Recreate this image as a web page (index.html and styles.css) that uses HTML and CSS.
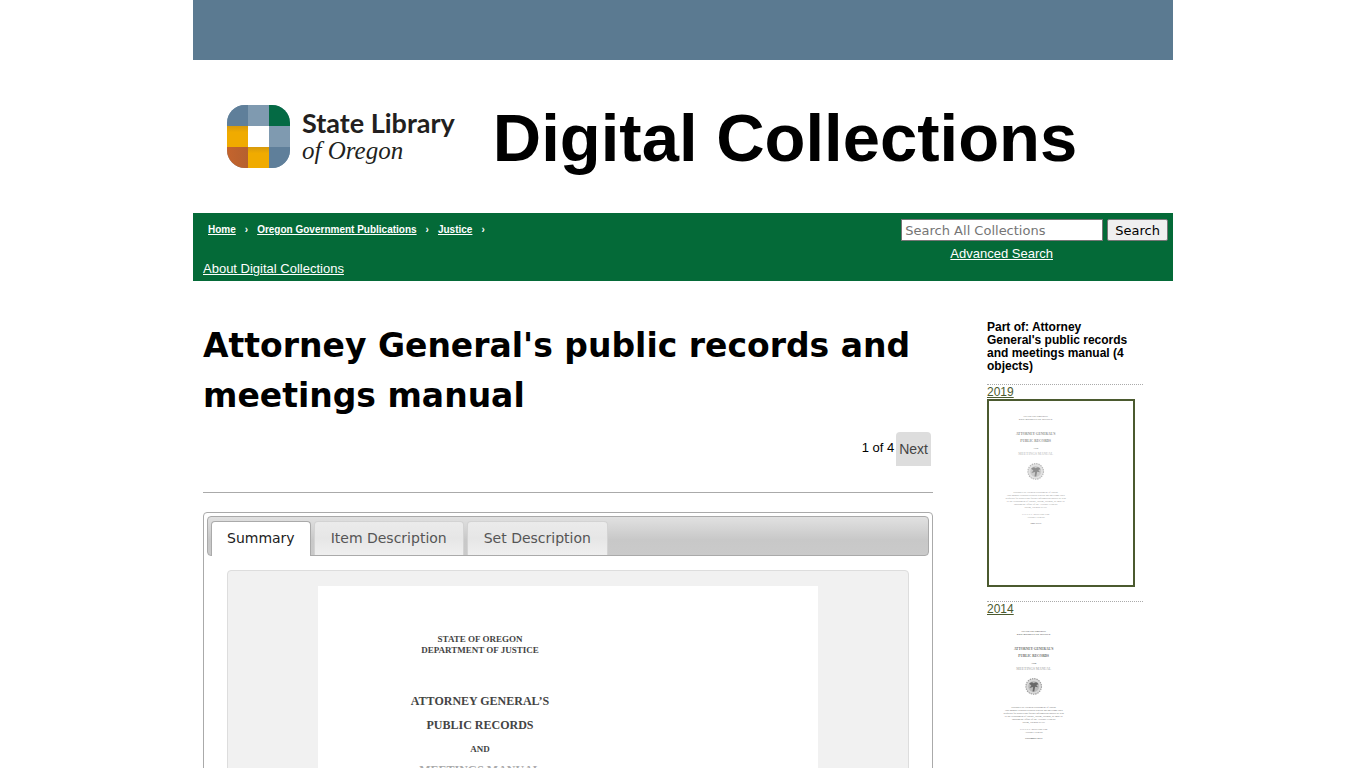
FILE: index.html
```html
<!DOCTYPE html>
<html lang="en">
<head>
<meta charset="utf-8">
<title>Attorney General's public records and meetings manual</title>
<meta name="viewport" content="width=device-width, initial-scale=1">
<link rel="stylesheet" href="styles.css">
</head>
<body>
<svg class="defs" aria-hidden="true">
  <defs>
    <clipPath id="logo-clip"><rect width="63" height="63" rx="18"/></clipPath>
    <linearGradient id="gold" x1="0" y1="0" x2="0" y2="1"><stop offset="0" stop-color="#d79a0c"/><stop offset=".3" stop-color="#f0ab00"/></linearGradient>
    <linearGradient id="rust" x1="0" y1="0" x2="1" y2="0"><stop offset="0" stop-color="#c4642d"/><stop offset="1" stop-color="#b5602f"/></linearGradient>
    <symbol id="cover" viewBox="0 0 500 640">
      <g class="cover-text">
        <g class="cover-small">
          <text x="162" y="56">STATE OF OREGON</text>
          <text x="162" y="67">DEPARTMENT OF JUSTICE</text>
        </g>
        <g class="cover-title">
          <text x="162" y="119">ATTORNEY GENERAL’S</text>
          <text x="162" y="143">PUBLIC RECORDS</text>
        </g>
        <text class="cover-small" x="162" y="166">AND</text>
        <text class="cover-title cover-faint" x="162" y="188">MEETINGS MANUAL</text>
        <circle cx="162" cy="245" r="27" fill="#d0d0d0" stroke="#888" stroke-width="4" stroke-dasharray="5 3"/>
        <circle cx="162" cy="245" r="19" fill="#aaa"/>
        <path d="M146 236q8-10 16-2q10-9 17 3l-8 3 6 8-10-2-3 17h-6l2-16-13 3 7-8z" fill="#444"/>
        <g class="cover-body">
          <text x="162" y="321">Published by Oregon Department of Justice</text>
          <text x="162" y="331">This manual describes public records and meetings laws</text>
          <text x="162" y="341">Requests for copies and further information should be sent</text>
          <text x="162" y="351">to the Department of Justice, Salem, Oregon, by mail or</text>
          <text x="162" y="361">through the office of the Attorney General</text>
          <text x="162" y="371">Salem, Oregon 97301</text>
          <text x="162" y="397">ELLEN F. ROSENBLUM</text>
          <text x="162" y="407">Attorney General</text>
        </g>
      </g>
    </symbol>
  </defs>
</svg>
<div class="page">
  <div class="topband"></div>
  <header class="masthead">
    <a class="logo" href="#">
      <svg class="logo-mark" viewBox="0 0 63 63" aria-hidden="true">
        <g clip-path="url(#logo-clip)">
          <rect width="63" height="63" fill="#7f9ab0"/>
          <rect width="21" height="21" fill="#5f7f9a"/>
          <rect x="42" width="21" height="21" fill="#046a44"/>
          <rect y="21" width="21" height="21" fill="url(#gold)"/>
          <rect x="21" y="21" width="21" height="21" fill="#fff"/>
          <rect y="42" width="21" height="21" fill="url(#rust)"/>
          <rect x="21" y="42" width="21" height="21" fill="url(#gold)"/>
          <rect x="42" y="42" width="21" height="21" fill="#5f7f9a"/>
        </g>
      </svg>
      <span class="logo-words"><span class="logo-name">State Library</span><span class="logo-place">of Oregon</span></span>
    </a>
    <div class="site-title">Digital Collections</div>
  </header>
  <div class="navbar">
    <div class="nav-left">
      <nav class="crumbs"><a href="#">Home</a><span>›</span><a href="#">Oregon Government Publications</a><span>›</span><a href="#">Justice</a><span>›</span></nav>
      <a class="about" href="#">About Digital Collections</a>
    </div>
    <form class="search">
      <div class="search-row">
        <input type="text" placeholder="Search All Collections" aria-label="Search All Collections">
        <button type="button">Search</button>
      </div>
      <a class="advanced" href="#">Advanced Search</a>
    </form>
  </div>
  <div class="content">
    <main class="main">
      <h1>Attorney General's public records and meetings manual</h1>
      <div class="pager"><span>1 of 4</span><button type="button">Next</button></div>
      <section class="tabs">
        <div class="tablist" role="tablist">
          <button type="button" class="tab active" role="tab" aria-selected="true">Summary</button>
          <button type="button" class="tab" role="tab" aria-selected="false">Item Description</button>
          <button type="button" class="tab" role="tab" aria-selected="false">Set Description</button>
        </div>
        <div class="panel">
          <svg class="cover-large" viewBox="0 0 500 640" role="img" aria-label="Manual cover"><use href="#cover" width="500" height="640"/></svg>
        </div>
      </section>
    </main>
    <aside class="sidebar">
      <h2>Part of: Attorney General's public records and meetings manual (4 objects)</h2>
      <div class="item">
        <a href="#">2019</a>
        <svg class="thumb current" viewBox="0 0 500 640" role="img" aria-label="2019 cover"><g class="faded"><use href="#cover" width="500" height="640"/><text class="cover-date" x="162" y="427">June 2019</text></g></svg>
      </div>
      <div class="item">
        <a href="#">2014</a>
        <svg class="thumb" viewBox="0 0 500 640" role="img" aria-label="2014 cover"><g class="soft"><use href="#cover" width="500" height="640"/><text class="cover-date" x="162" y="427">November 2014</text></g></svg>
      </div>
    </aside>
  </div>
</div>
</body>
</html>
```

FILE: styles.css
```css
* { box-sizing: border-box; }
body {
  margin: 0;
  background: #fff;
  color: #000;
  font-family: "Liberation Sans", Arial, sans-serif;
  font-size: 13px;
}
.defs { display: block; width: 0; height: 0; }
.page { max-width: 980px; margin: 0 auto; }
.topband { height: 60px; background: #5b7a91; }

.masthead {
  display: flex;
  align-items: center;
  gap: 38px;
  height: 153px;
  padding: 0 34px;
}
.logo { display: flex; align-items: center; gap: 12px; color: #231f20; text-decoration: none; }
.logo-mark { width: 63px; height: 63px; }
.logo-words { display: flex; flex-direction: column; }
.logo-name { font: bold 27px/28px Lato, sans-serif; }
.logo-place { font: italic 25px/28px "Liberation Serif", serif; }
.site-title { padding-top: 2px; font-size: 67px; font-weight: bold; line-height: 76px; white-space: nowrap; }

.navbar {
  display: flex;
  justify-content: space-between;
  padding: 6px 5px 4px 10px;
  background: #046a38;
  color: #fff;
}
.navbar a { color: #fff; }
.nav-left { display: flex; flex-direction: column; justify-content: space-between; align-items: flex-start; }
.crumbs { display: flex; gap: 9px; padding: 4px 5px; font-size: 10px; font-weight: bold; line-height: 13px; }
.about { line-height: 16px; }
.search { display: flex; flex-direction: column; align-items: center; gap: 4px; padding-bottom: 15px; }
.search-row { display: flex; gap: 4px; }
.search input, .search button {
  height: 22px;
  border: 1px solid #767676;
  font: 13px "DejaVu Sans", sans-serif;
}
.search input { width: 202px; padding: 1px 3px; border-radius: 0; }
.search input::placeholder { color: #757575; }
.search button { padding: 0 7px; border-radius: 2px; background: #efefef; color: #000; }
.advanced { padding-right: 66px; line-height: 17px; }

.content { display: flex; justify-content: space-between; padding: 39px 30px 30px 10px; }
.main { width: 730px; }
h1 { margin: 0; padding-top: 1px; font: bold 33px/50px "DejaVu Sans", sans-serif; }
.pager {
  display: flex;
  justify-content: flex-end;
  align-items: flex-start;
  gap: 2px;
  margin-bottom: 19px;
  padding: 11px 2px 26px;
  border-bottom: 1px solid #aaa;
  line-height: 32px;
}
.pager button {
  height: 34px;
  padding: 0 3px;
  border: 0;
  border-radius: 4px 4px 0 0;
  background: #ddd;
  color: #444;
  font: 14px "Liberation Sans", sans-serif;
}

.tabs { padding: 3px; border: 1px solid #aaa; border-radius: 4px; }
.tablist {
  display: flex;
  gap: 3px;
  height: 40px;
  padding: 4px 3px 0;
  border: 1px solid #aaa;
  border-radius: 4px;
  background: linear-gradient(#e1e1e1, #c8c8c8 60%, #cacaca);
}
.tab {
  height: 34px;
  padding: 0 16px 2px;
  border: 1px solid #d3d3d3;
  border-bottom: 0;
  border-radius: 4px 4px 0 0;
  background: linear-gradient(#ebebeb, #e6e6e6 50%, #efefef);
  color: #555;
  font: 14px "DejaVu Sans", sans-serif;
}
.tab.active { height: 35px; padding: 0 15px 3px; border-color: #aaa; background: #fff; color: #212121; }
.panel {
  margin: 14px 20px;
  padding: 15px;
  border: 1px solid #ddd;
  border-radius: 4px;
  background: #f1f1f1;
  text-align: center;
}
.cover-large { display: block; width: 500px; max-width: 100%; margin: 0 auto; background: #fff; }
.cover-text { font-family: "Liberation Serif", serif; text-anchor: middle; fill: #444; }
.cover-small { font-size: 9px; font-weight: bold; }
.cover-title { font-size: 12px; font-weight: bold; }
.cover-faint { fill: #aaa; }
.cover-body { font-size: 9px; }
.cover-date { font: bold 9px "Liberation Serif", serif; text-anchor: middle; fill: #444; }
.faded { opacity: .6; }
.soft { opacity: .8; }

.sidebar { width: 156px; font-size: 12px; }
.sidebar h2 { margin: 0 0 11px; padding: 1px 10px 0 0; font-size: 12px; line-height: 13px; }
.item { margin-bottom: 14px; border-top: 1px dotted #aaa; }
.item a { display: block; line-height: 14px; color: #4b5a2f; }
.thumb { display: block; width: 144px; height: 184px; }
.thumb.current { width: 148px; height: 188px; border: 2px solid #4b5a2f; }
```
